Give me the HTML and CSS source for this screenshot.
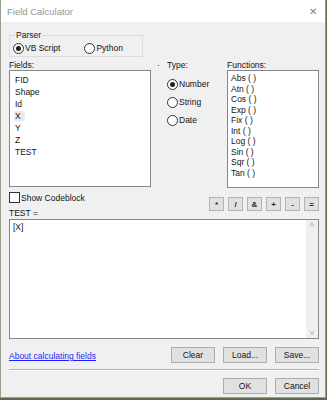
FILE: index.html
```html
<!DOCTYPE html>
<html lang="en">
<head>
  <meta charset="UTF-8">
  <title>Field Calculator</title>
  <link rel="stylesheet" href="styles.css">
</head>
<body>
  <div class="window">
    <div class="titlebar">
      <span class="title">Field Calculator</span>
      <span class="close">&#x2715;</span>
    </div>

    <div class="content">
      <!-- parser choice -->
      <fieldset class="parser">
        <legend>Parser</legend>
        <label class="radio"><span class="dot checked"></span>VB Script</label>
        <label class="radio"><span class="dot"></span>Python</label>
      </fieldset>

      <div class="columns">
        <div class="col-fields">
          <div class="caption">Fields:</div>
          <div class="listbox fields">
            <div>FID</div>
            <div>Shape</div>
            <div>Id</div>
            <div><span class="sel">X</span></div>
            <div>Y</div>
            <div>Z</div>
            <div>TEST</div>
          </div>
        </div>
        <div class="col-mark">&#x02D9;</div>
        <div class="col-type">
          <div class="caption">Type:</div>
          <label class="radio type"><span class="dot checked"></span>Number</label>
          <label class="radio type"><span class="dot"></span>String</label>
          <label class="radio type"><span class="dot"></span>Date</label>
        </div>
        <div class="col-funcs">
          <div class="caption">Functions:</div>
          <div class="listbox funcs">
            <div>Abs ( )</div>
            <div>Atn ( )</div>
            <div>Cos ( )</div>
            <div>Exp ( )</div>
            <div>Fix ( )</div>
            <div>Int ( )</div>
            <div>Log ( )</div>
            <div>Sin ( )</div>
            <div>Sqr ( )</div>
            <div>Tan ( )</div>
          </div>
        </div>
      </div>

      <div class="opsrow">
        <label class="check"><span class="box"></span>Show Codeblock</label>
        <div class="ops">
          <button class="op">*</button>
          <button class="op">/</button>
          <button class="op">&amp;</button>
          <button class="op">+</button>
          <button class="op">-</button>
          <button class="op">=</button>
        </div>
      </div>

      <div class="caption expr-label">TEST =</div>
      <div class="expr">
        <div class="expr-text">[X]</div>
        <div class="scroll">
          <span class="arrow">&#x02C4;</span>
          <span class="arrow">&#x02C5;</span>
        </div>
      </div>

      <div class="actions">
        <a class="help" href="#">About calculating fields</a>
        <div class="btns">
          <button class="btn">Clear</button>
          <button class="btn">Load...</button>
          <button class="btn">Save...</button>
        </div>
      </div>

      <div class="sep"></div>

      <div class="footer">
        <button class="btn">OK</button>
        <button class="btn">Cancel</button>
      </div>
    </div>
  </div>
</body>
</html>
```

FILE: styles.css
```css
body {
  margin: 0;
  width: 327px;
  height: 400px;
  background: rgb(92, 104, 80);
  font-family: "Liberation Sans", Arial, sans-serif;
  font-size: 8.5px;
  color: rgb(20, 20, 20);
  overflow: hidden;
}

.window {
  width: 324px;
  height: 397px;
  background: rgb(240, 240, 240);
  border: 1px solid rgb(150, 160, 140);
  border-top: none;
  display: flex;
  flex-direction: column;
}

.titlebar {
  height: 22px;
  background: white;
  display: flex;
  align-items: center;
  justify-content: space-between;
  padding: 0 8px 0 6px;
}

.title {
  font-size: 9.5px;
  color: rgb(150, 150, 150);
}

.close {
  font-size: 10px;
  color: rgb(130, 130, 130);
}

.content {
  padding: 0 6px 0 7px;
}

.parser {
  width: 134px;
  height: 27px;
  margin: 8px 0 0 1px;
  padding: 0 0 0 3px;
  border: 1px solid rgb(220, 220, 220);
  display: flex;
  align-items: center;
  gap: 24px;
  box-sizing: border-box;
}

.parser legend {
  padding: 0 1px;
  margin-left: 2px;
}

.radio {
  display: flex;
  align-items: center;
  gap: 1px;
}

.dot {
  width: 9px;
  height: 9px;
  border: 1px solid rgb(50, 50, 50);
  border-radius: 50%;
  background: white;
  display: inline-flex;
  align-items: center;
  justify-content: center;
}

.dot.checked::after {
  content: "";
  width: 5px;
  height: 5px;
  border-radius: 50%;
  background: rgb(30, 30, 30);
}

.columns {
  display: flex;
  margin-top: 4px;
  margin-left: 1px;
}

.caption {
  height: 9px;
  line-height: 9px;
}

.listbox {
  background: white;
  border: 1px solid rgb(130, 135, 144);
  box-sizing: border-box;
}

.col-fields {
  width: 142px;
}

.fields {
  height: 117px;
  padding: 3px 0 0 5px;
  line-height: 12px;
}

.sel {
  background: rgb(235, 235, 235);
  padding: 0 4px 0 1px;
  margin-left: -1px;
}

.col-mark {
  width: 16px;
  text-align: center;
  padding-top: 7px;
  font-size: 10px;
  line-height: 4px;
}

.col-type {
  width: 60px;
}

.radio.type {
  margin-top: 6px;
  height: 12px;
}

.col-type .caption + .radio.type {
  margin-top: 8px;
}

.col-funcs {
  width: 92px;
}

.funcs {
  height: 118px;
  padding: 2px 0 0 3px;
  line-height: 10.5px;
}

.opsrow {
  display: flex;
  justify-content: space-between;
  align-items: flex-start;
  margin-top: 4px;
  margin-left: 1px;
  height: 15px;
}

.check {
  display: flex;
  align-items: center;
  gap: 1px;
  height: 11px;
}

.box {
  width: 9px;
  height: 9px;
  border: 1px solid rgb(50, 50, 50);
  background: white;
}

.ops {
  display: flex;
  gap: 4px;
  margin-top: 5px;
}

.op {
  width: 15px;
  height: 14px;
  padding: 0;
  font-family: inherit;
  font-size: 8px;
  font-weight: bold;
  background: rgb(225, 225, 225);
  border: 1px solid rgb(180, 180, 180);
  color: rgb(40, 40, 40);
}

.expr-label {
  margin: 2px 0 0 1px;
}

.expr {
  height: 118px;
  margin: 1px 0 0 1px;
  background: white;
  border: 1px solid rgb(130, 135, 144);
  display: flex;
  justify-content: space-between;
}

.expr-text {
  padding: 2px 3px;
}

.scroll {
  width: 12px;
  background: rgb(240, 240, 240);
  display: flex;
  flex-direction: column;
  justify-content: space-between;
  align-items: center;
  color: rgb(170, 170, 170);
  font-size: 9px;
  line-height: 10px;
}

.actions {
  display: flex;
  justify-content: space-between;
  align-items: center;
  margin: 8px 0 0 1px;
}

.help {
  color: rgb(30, 30, 255);
  text-decoration: underline;
  padding-top: 2px;
}

.btns,
.footer {
  display: flex;
  gap: 8px;
}

.btn {
  width: 44px;
  height: 16px;
  padding: 0;
  font-family: inherit;
  font-size: 8.5px;
  background: rgb(225, 225, 225);
  border: 1px solid rgb(173, 173, 173);
  color: rgb(20, 20, 20);
}

.sep {
  height: 1px;
  background: rgb(180, 180, 180);
  margin: 6px 0 0 1px;
  border-bottom: 1px solid white;
}

.footer {
  justify-content: flex-end;
  margin-top: 7px;
}
```
